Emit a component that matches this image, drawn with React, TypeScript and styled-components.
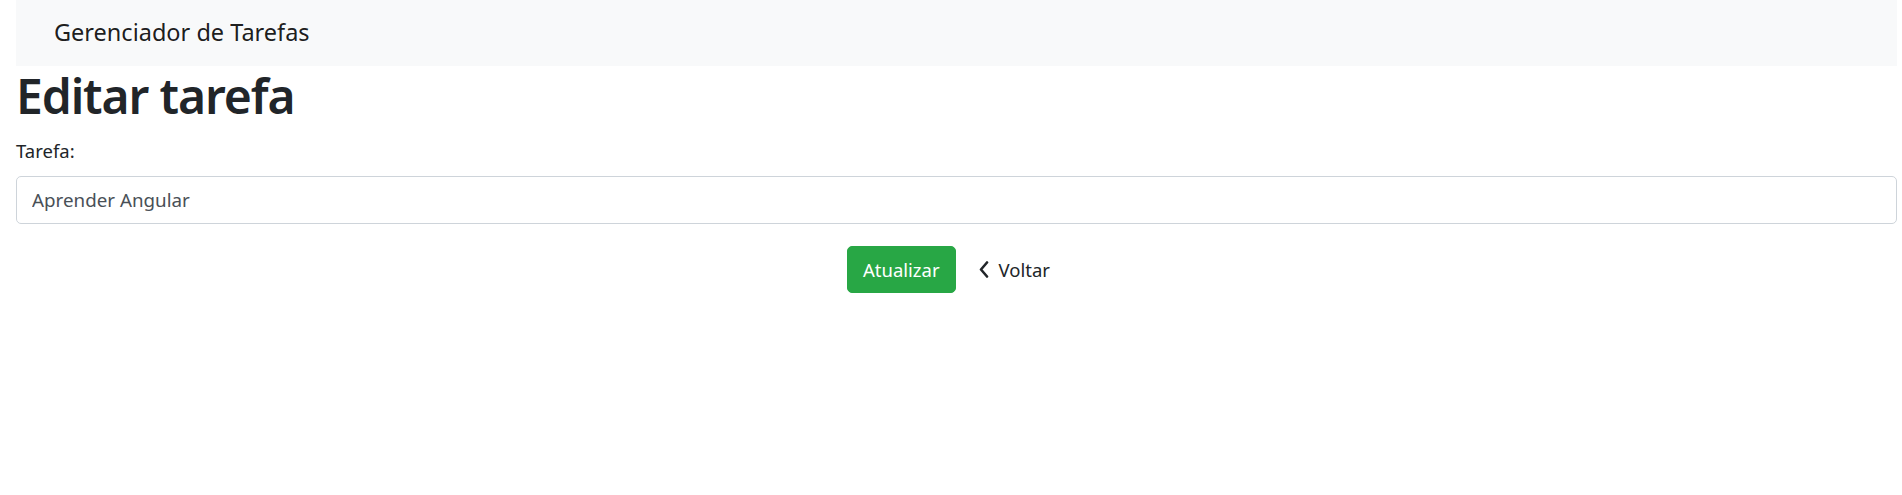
import styled, { createGlobalStyle } from 'styled-components';

const GlobalStyle = createGlobalStyle`
  *, *::before, *::after {
    box-sizing: border-box;
  }
  body {
    margin: 0;
    padding: 0 5px 0 16px;
    background: #ffffff;
    color: #212529;
    font-family: 'Noto Sans', 'Open Sans', Arial, sans-serif;
    font-size: 20px;
    line-height: 1.5;
  }
`;

const Navbar = styled.nav`
  display: flex;
  align-items: center;
  height: 66px;
  padding: 0 0 0 38px;
  background: #f8f9fa;
`;

const Brand = styled.a`
  font-size: 23.5px;
  color: rgba(0, 0, 0, 0.9);
  text-decoration: none;
`;

const Title = styled.h1`
  margin: 0 0 10px;
  font-size: 48px;
  font-weight: 600;
  letter-spacing: -1.1px;
  line-height: 60px;
  color: #212529;
`;

const FormGroup = styled.div`
  margin-bottom: 22px;
`;

const Label = styled.label`
  display: block;
  margin-bottom: 10px;
  font-size: 18.5px;
  line-height: 30px;
`;

const Input = styled.input`
  display: block;
  width: 100%;
  height: 47.5px;
  padding: 7.5px 15px;
  font-family: inherit;
  font-size: 18.8px;
  color: #495057;
  background: #ffffff;
  border: 1px solid #ced4da;
  border-radius: 5px;
  outline: none;
`;

const Actions = styled.div`
  display: flex;
  justify-content: center;
  gap: 7px;
`;

const Button = styled.button<{ $variant: 'success' | 'link' }>`
  display: inline-flex;
  align-items: center;
  gap: 10px;
  height: 47px;
  padding: 0 15px;
  font-family: inherit;
  font-size: 18.5px;
  border: 1px solid transparent;
  border-radius: 5px;
  cursor: pointer;
  color: ${(p) => (p.$variant === 'success' ? '#ffffff' : '#212529')};
  background: ${(p) => (p.$variant === 'success' ? '#28a745' : 'transparent')};
  border-color: ${(p) => (p.$variant === 'success' ? '#28a745' : 'transparent')};
`;

function ChevronLeft() {
  return (
    <svg width="10" height="17" viewBox="0 0 10 17" aria-hidden="true">
      <polyline
        points="8,1.5 2,8.5 8,15.5"
        fill="none"
        stroke="#212529"
        strokeWidth="2.6"
        strokeLinecap="round"
        strokeLinejoin="round"
      />
    </svg>
  );
}

export default function App(): JSX.Element {
  return (
    <>
      <GlobalStyle />
      <Navbar>
        <Brand href="#">Gerenciador de Tarefas</Brand>
      </Navbar>
      <Title>Editar tarefa</Title>
      <form onSubmit={(e) => e.preventDefault()}>
        <FormGroup>
          <Label htmlFor="tarefa">Tarefa:</Label>
          <Input id="tarefa" type="text" defaultValue="Aprender Angular" />
        </FormGroup>
        <Actions>
          <Button $variant="success" type="submit">
            Atualizar
          </Button>
          <Button $variant="link" type="button">
            <ChevronLeft />
            Voltar
          </Button>
        </Actions>
      </form>
    </>
  );
}
